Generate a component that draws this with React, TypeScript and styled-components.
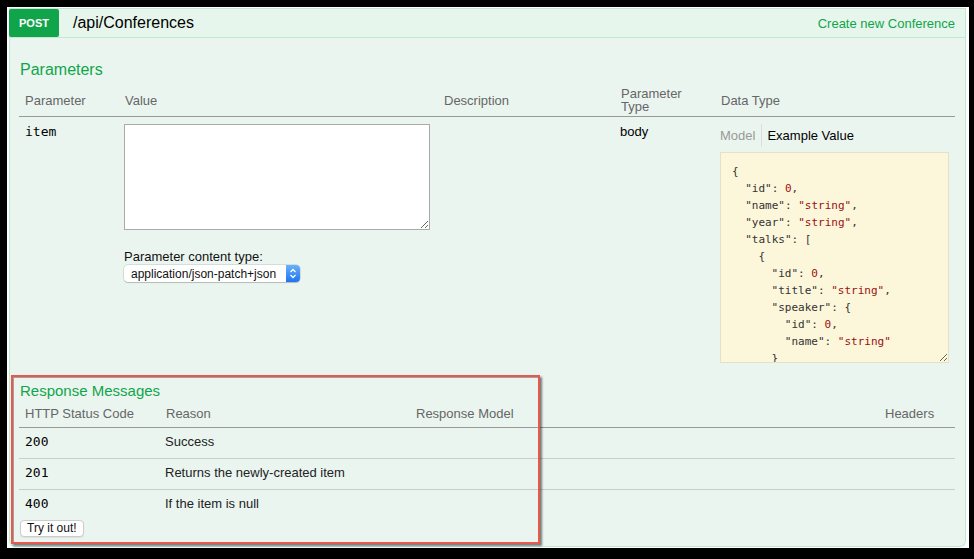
import React from 'react';
import styled, { createGlobalStyle } from 'styled-components';

const GlobalStyle = createGlobalStyle`
  body {
    margin: 0;
    background: #000;
    font-family: 'Liberation Sans', Arial, sans-serif;
  }
`;

const GREEN = '#10a54a';
const MONO = "'DejaVu Sans Mono', 'Liberation Mono', monospace";

type Token = { text: string; value?: boolean };

// example value, one entry per line: indent + tokens
const sampleLines: { indent: number; tokens: Token[] }[] = [
  { indent: 0, tokens: [{ text: '{' }] },
  { indent: 1, tokens: [{ text: '"id": ' }, { text: '0', value: true }, { text: ',' }] },
  { indent: 1, tokens: [{ text: '"name": ' }, { text: '"string"', value: true }, { text: ',' }] },
  { indent: 1, tokens: [{ text: '"year": ' }, { text: '"string"', value: true }, { text: ',' }] },
  { indent: 1, tokens: [{ text: '"talks": [' }] },
  { indent: 2, tokens: [{ text: '{' }] },
  { indent: 3, tokens: [{ text: '"id": ' }, { text: '0', value: true }, { text: ',' }] },
  { indent: 3, tokens: [{ text: '"title": ' }, { text: '"string"', value: true }, { text: ',' }] },
  { indent: 3, tokens: [{ text: '"speaker": {' }] },
  { indent: 4, tokens: [{ text: '"id": ' }, { text: '0', value: true }, { text: ',' }] },
  { indent: 4, tokens: [{ text: '"name": ' }, { text: '"string"', value: true }] },
  { indent: 3, tokens: [{ text: '}' }] },
];

const responses = [
  { code: '200', reason: 'Success' },
  { code: '201', reason: 'Returns the newly-created item' },
  { code: '400', reason: 'If the item is null' },
];

const App = () => {
  return (
    <>
      <GlobalStyle />
      <Frame>
        <Panel>
          <Card>
            <Heading>
              <MethodBadge>POST</MethodBadge>
              <PathText>/api/Conferences</PathText>
              <Summary>Create new Conference</Summary>
            </Heading>
            <Content>
              <SectionTitle>Parameters</SectionTitle>
              <Table>
                <colgroup>
                  <col style={{ width: 100 }} />
                  <col style={{ width: 319 }} />
                  <col style={{ width: 177 }} />
                  <col style={{ width: 100 }} />
                  <col />
                </colgroup>
                <thead>
                  <tr>
                    <Th>Parameter</Th>
                    <Th>Value</Th>
                    <Th>Description</Th>
                    <Th>Parameter Type</Th>
                    <Th>Data Type</Th>
                  </tr>
                </thead>
                <tbody>
                  <tr>
                    <ParamCell>
                      <Code>item</Code>
                    </ParamCell>
                    <ParamCell>
                      <ValueArea />
                      <FieldLabel>Parameter content type:</FieldLabel>
                      <SelectWrap>
                        <NativeSelect defaultValue="application/json-patch+json">
                          <option>application/json-patch+json</option>
                          <option>application/json</option>
                          <option>text/json</option>
                        </NativeSelect>
                        <Stepper>
                          <svg width="8" height="11" viewBox="0 0 8 11">
                            <path d="M1.5 4 L4 1.5 L6.5 4" fill="none" stroke="#fff" strokeWidth="1.3" />
                            <path d="M1.5 7 L4 9.5 L6.5 7" fill="none" stroke="#fff" strokeWidth="1.3" />
                          </svg>
                        </Stepper>
                      </SelectWrap>
                    </ParamCell>
                    <ParamCell />
                    <ParamCell>body</ParamCell>
                    <ParamCell>
                      <Tabs>
                        <Tab>Model</Tab>
                        <Tab active>Example Value</Tab>
                      </Tabs>
                      <Sample>
                        {sampleLines.map((line, i) => (
                          <SampleLine key={i} indent={line.indent}>
                            {line.tokens.map((t, j) =>
                              t.value ? <V key={j}>{t.text}</V> : <K key={j}>{t.text}</K>
                            )}
                          </SampleLine>
                        ))}
                      </Sample>
                    </ParamCell>
                  </tr>
                </tbody>
              </Table>

              <SectionTitle small>Response Messages</SectionTitle>
              <Table>
                <colgroup>
                  <col style={{ width: 141 }} />
                  <col style={{ width: 250 }} />
                  <col style={{ width: 469 }} />
                  <col />
                </colgroup>
                <thead>
                  <tr>
                    <Th compact>HTTP Status Code</Th>
                    <Th compact>Reason</Th>
                    <Th compact>Response Model</Th>
                    <Th compact>Headers</Th>
                  </tr>
                </thead>
                <tbody>
                  {responses.map((r, i) => (
                    <Row key={r.code} last={i === responses.length - 1}>
                      <RespCell>
                        <Code>{r.code}</Code>
                      </RespCell>
                      <RespCell>{r.reason}</RespCell>
                      <RespCell />
                      <RespCell />
                    </Row>
                  ))}
                </tbody>
              </Table>
              <TryButton type="button">Try it out!</TryButton>
            </Content>
            <Highlight />
          </Card>
        </Panel>
      </Frame>
    </>
  );
};

export default App;

const Frame = styled.div`
  box-sizing: border-box;
  width: 974px;
  height: 559px;
  padding: 7px 5px 11px 7px;
  background: #000;
  display: flex;
`;

const Panel = styled.div`
  flex: 1;
  display: flex;
  background: #fff;
  padding: 1px 3px 2px 2px;
`;

const Card = styled.div`
  position: relative;
  flex: 1;
  display: flex;
  flex-direction: column;
`;

const Heading = styled.div`
  display: flex;
  align-items: center;
  height: 28px;
  background: #e7f6ec;
  border: 1px solid #c3e8d1;
  padding-right: 10px;
`;

const MethodBadge = styled.span`
  display: flex;
  align-items: center;
  justify-content: center;
  width: 50px;
  height: 28px;
  margin-left: -1px;
  background: ${GREEN};
  color: #fff;
  font-size: 11px;
  font-weight: bold;
  border-radius: 2px;
`;

const PathText = styled.span`
  margin-left: 14px;
  font-size: 16px;
  color: #000;
  flex: 1;
`;

const Summary = styled.span`
  font-size: 13px;
  color: ${GREEN};
`;

const Content = styled.div`
  flex: 1;
  background: #ebf5f0;
  border: 1px solid #c3e8d1;
  border-top: none;
  border-radius: 0 0 6px 6px;
  padding: 22px 10px 9px 9px;
`;

const SectionTitle = styled.h4<{ small?: boolean }>`
  margin: ${(p) => (p.small ? '13px 0 0 1px' : '0 0 4px 1px')};
  font-size: ${(p) => (p.small ? '15px' : '16px')};
  line-height: 20px;
  font-weight: normal;
  color: ${GREEN};
`;

const Table = styled.table`
  width: 100%;
  table-layout: fixed;
  border-collapse: collapse;
`;

const Th = styled.th<{ compact?: boolean }>`
  text-align: left;
  font-weight: normal;
  font-size: 13px;
  line-height: 13px;
  color: #666;
  padding: ${(p) => (p.compact ? '6px 5px 7px 6px' : '3px 5px 3px 6px')};
  border-bottom: 1px solid #999;
  vertical-align: middle;
`;

const ParamCell = styled.td`
  vertical-align: top;
  padding: 7px 5px 5px;
  font-size: 13px;
  line-height: 15px;
  color: #000;
`;

const Code = styled.span`
  font-family: ${MONO};
  font-size: 13px;
  color: #000;
  padding-left: 1px;
`;

const ValueArea = styled.textarea`
  display: block;
  box-sizing: border-box;
  width: 306px;
  height: 106px;
  margin: 0;
  border: 1px solid #aaa;
  background: #fff;
`;

const FieldLabel = styled.div`
  margin-top: 19px;
  font-size: 13px;
  line-height: 16px;
  color: #111;
`;

const SelectWrap = styled.div`
  display: inline-flex;
  width: 176px;
  height: 17px;
  background: #fff;
  border-radius: 4px;
  box-shadow: 0 0 0 0.5px rgba(0, 0, 0, 0.2), 0 1px 1px rgba(0, 0, 0, 0.15);
  overflow: hidden;
`;

const NativeSelect = styled.select`
  flex: 1;
  appearance: none;
  border: none;
  background: transparent;
  padding: 0 0 0 7px;
  margin: 0;
  font-family: 'Liberation Sans', Arial, sans-serif;
  font-size: 12px;
  color: #111;
  outline: none;
`;

const Stepper = styled.span`
  display: flex;
  align-items: center;
  justify-content: center;
  width: 14px;
  background: linear-gradient(#6bb0fb, #1e74f2);
`;

const Tabs = styled.div`
  display: flex;
  align-items: center;
  height: 23px;
`;

const Tab = styled.span<{ active?: boolean }>`
  font-size: 13px;
  color: ${(p) => (p.active ? '#000' : '#999')};
  padding: ${(p) => (p.active ? '4px 0 4px 5px' : '4px 6px 4px 0')};
  border-left: ${(p) => (p.active ? '1px solid #ddd' : 'none')};
`;

const Sample = styled.div`
  box-sizing: border-box;
  width: 229px;
  height: 211px;
  margin-top: 5px;
  padding: 10px 11px;
  background: #fcf6db;
  border: 1px solid #e5e0c6;
  font-family: ${MONO};
  font-size: 11px;
  line-height: 17px;
  overflow: hidden;
  resize: vertical;
`;

const SampleLine = styled.div<{ indent: number }>`
  white-space: pre;
  height: 17px;
  padding-left: ${(p) => p.indent * 13.2}px;
`;

const K = styled.span`
  color: #333;
`;

const V = styled.span`
  color: #9a1010;
`;

const Row = styled.tr<{ last?: boolean }>`
  border-bottom: ${(p) => (p.last ? 'none' : '1px solid #ccc')};
`;

const RespCell = styled.td`
  padding: 5px 5px 7px;
  font-size: 13px;
  line-height: 18px;
  color: #222;
  vertical-align: middle;
`;

const TryButton = styled.button`
  display: block;
  height: 17px;
  margin: 0 0 0 1px;
  padding: 0 6px;
  background: #fff;
  border: 1px solid #ccc;
  border-radius: 4px;
  box-shadow: 0 1px 1px rgba(0, 0, 0, 0.08);
  font-family: 'Liberation Sans', Arial, sans-serif;
  font-size: 12px;
  line-height: 15px;
  color: #111;
`;

const Highlight = styled.div`
  position: absolute;
  left: 2px;
  top: 367px;
  width: 529px;
  height: 169px;
  box-sizing: border-box;
  border: 2px solid #e9584c;
  box-shadow: inset 1px 1px 0 #9aa39e, 2px 2px 2px rgba(0, 0, 0, 0.5);
  pointer-events: none;
`;
